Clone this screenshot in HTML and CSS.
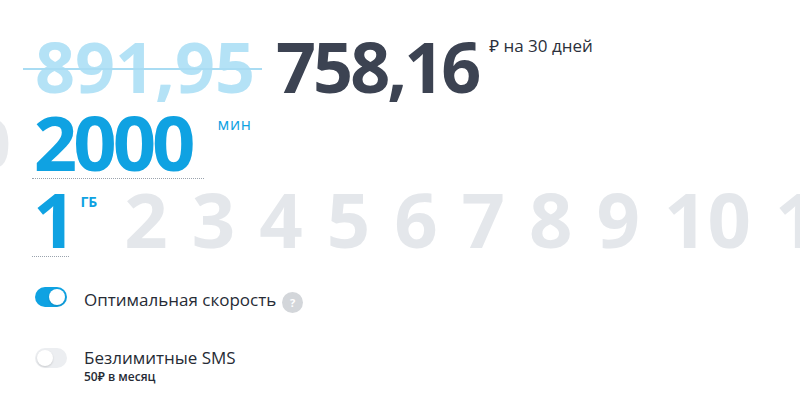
FILE: index.html
```html
<!DOCTYPE html>
<html lang="ru">
<head>
<meta charset="utf-8">
<link rel="stylesheet" href="styles.css">
</head>
<body>
<div class="tariff">
  <div class="price-row">
    <span class="old-price">891,95</span>
    <span class="new-price">758,16</span>
    <span class="price-unit">₽ на 30 дней</span>
  </div>
  <div class="minutes-row">
    <span class="ghost-min">0</span>
    <span class="value-sel min-val">2000</span>
    <span class="unit min-unit">мин</span>
  </div>
  <div class="gb-row">
    <div class="gb-sel">
      <span class="value-sel gb-val">1</span>
      <span class="unit gb-unit">ГБ</span>
    </div>
    <span class="gb-opt">2</span>
    <span class="gb-opt">3</span>
    <span class="gb-opt">4</span>
    <span class="gb-opt">5</span>
    <span class="gb-opt">6</span>
    <span class="gb-opt">7</span>
    <span class="gb-opt">8</span>
    <span class="gb-opt">9</span>
    <span class="gb-opt">10</span>
    <span class="gb-opt">11</span>
  </div>
  <div class="option">
    <span class="toggle on"><span class="knob"></span></span>
    <div class="opt-text">
      <div class="opt-title">Оптимальная скорость <span class="help">?</span></div>
    </div>
  </div>
  <div class="option opt-sms">
    <span class="toggle"><span class="knob"></span></span>
    <div class="opt-text">
      <div class="opt-title">Безлимитные SMS</div>
      <div class="opt-sub">50₽ в месяц</div>
    </div>
  </div>
</div>
</body>
</html>
```
FILE: styles.css
```css
html, body {
  margin: 0;
  padding: 0;
  background: #ffffff;
  overflow: hidden;
}
body {
  width: 800px;
  height: 409px;
  font-family: "Open Sans", "Noto Sans", sans-serif;
  color: #2b303b;
}
.tariff {
  padding: 26px 0 0 35px;
  overflow: hidden;
  height: 383px;
}
.price-row {
  display: flex;
  align-items: flex-start;
  height: 80px;
}
.old-price {
  position: relative;
  font-size: 70px;
  font-weight: 700;
  line-height: 80px;
  color: #b4e2f6;
  letter-spacing: 0;
}
.old-price::after {
  content: "";
  position: absolute;
  left: -12px;
  right: -7px;
  top: 42px;
  height: 2px;
  background: #a9dcf3;
}
.new-price {
  margin-left: 21px;
  font-size: 70px;
  font-weight: 700;
  line-height: 80px;
  color: #3c4352;
  letter-spacing: -3px;
}
.price-unit {
  margin-left: 11px;
  margin-top: 8px;
  font-size: 17px;
  color: #2b303b;
}
.minutes-row {
  display: flex;
  align-items: flex-start;
  height: 76px;
}
.ghost-min {
  margin-left: -62px;
  margin-right: 21px;
  margin-top: -4px;
  font-size: 66px;
  font-weight: 700;
  line-height: 80px;
  color: #e8eaed;
}
.value-sel {
  color: #0fa2e2;
  font-weight: 700;
  border-bottom: 1px dotted #9aa3ad;
}
.min-val {
  font-size: 76px;
  line-height: 72px;
  padding: 0 12px 0 2px;
  letter-spacing: -4px;
}
.unit {
  color: #0fa2e2;
  margin-left: 14px;
}
.min-unit {
  font-size: 16px;
  letter-spacing: 0.6px;
  margin-top: 7px;
}
.gb-row {
  display: flex;
  align-items: flex-start;
  gap: 24px;
  white-space: nowrap;
}
.gb-sel {
  display: flex;
  align-items: flex-start;
  margin-left: -3px;
  margin-right: 3px;
}
.gb-val {
  font-size: 76px;
  line-height: 74px;
  letter-spacing: -8px;
  padding: 0 1px;
}
.gb-unit {
  font-size: 14px;
  font-weight: 700;
  margin-left: 11px;
  margin-top: 10px;
}
.gb-opt {
  font-size: 76px;
  font-weight: 700;
  line-height: 74px;
  color: #e4e7eb;
}
.option {
  display: flex;
  align-items: flex-start;
  margin-top: 29px;
}
.opt-sms {
  margin-top: 34px;
}
.toggle {
  position: relative;
  width: 32px;
  height: 20px;
  border-radius: 10px;
  background: #eceef1;
  flex: none;
  margin-top: 1px;
}
.toggle .knob {
  position: absolute;
  top: 2px;
  left: 2px;
  width: 16px;
  height: 16px;
  border-radius: 50%;
  background: #ffffff;
  box-shadow: 0 1px 2px rgba(0,0,0,0.15);
}
.toggle.on {
  background: #0fa2e2;
}
.toggle.on .knob {
  left: 14px;
}
.opt-text {
  margin-left: 17px;
}
.opt-title {
  display: flex;
  align-items: center;
  font-size: 17px;
  line-height: 22px;
  color: #262b35;
}
.help {
  display: inline-flex;
  align-items: center;
  justify-content: center;
  width: 21px;
  height: 21px;
  margin-left: 6px;
  margin-top: 6px;
  border-radius: 50%;
  background: #d3d6da;
  color: #ffffff;
  font-size: 11px;
  font-weight: 700;
}
.opt-sub {
  font-size: 12px;
  font-weight: 600;
  line-height: 16px;
  color: #262b35;
}
```
